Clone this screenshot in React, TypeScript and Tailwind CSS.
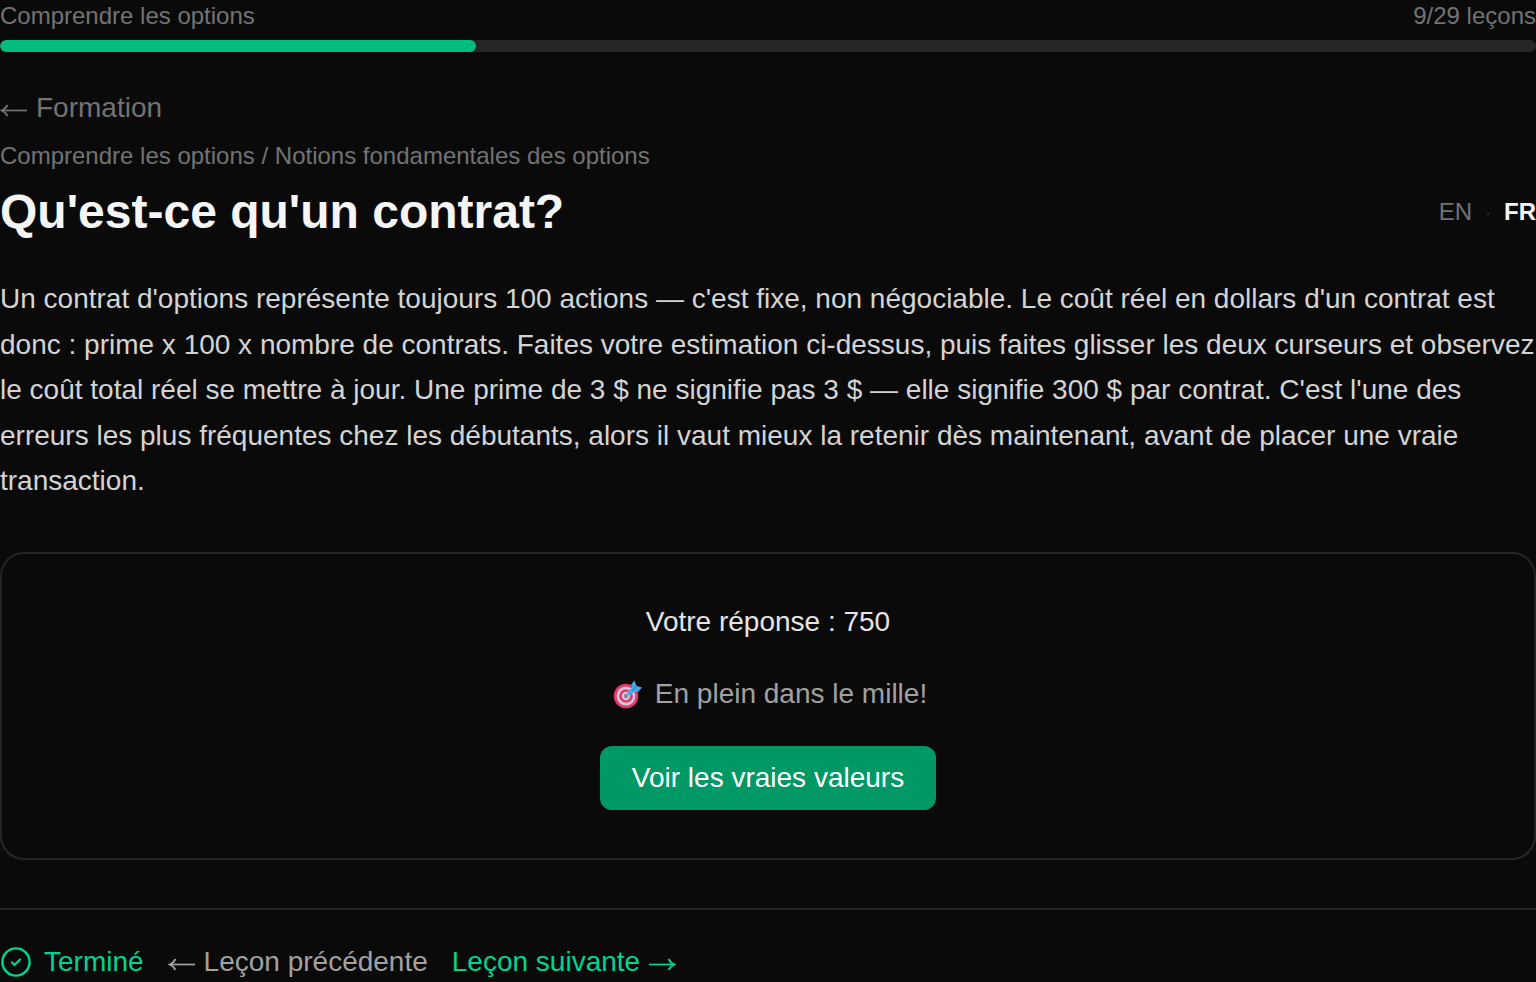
import { useState } from "react";

const lessonsDone = 9;
const lessonsTotal = 29;

type Lang = "en" | "fr";

function ArrowLeft() {
  return (
    <svg
      viewBox="0 0 28 40"
      className="w-7 h-10 shrink-0"
      fill="none"
      stroke="currentColor"
      strokeWidth="1.7"
      aria-hidden="true"
    >
      <path d="M27 22.5H2" />
      <path d="M7.5 17Q5.5 21 1.5 22.5Q5.5 24 7.5 28" />
    </svg>
  );
}

function ArrowRight() {
  return (
    <svg
      viewBox="0 0 28 40"
      className="w-7 h-10 shrink-0"
      fill="none"
      stroke="currentColor"
      strokeWidth="1.7"
      aria-hidden="true"
    >
      <path d="M1 22.5H26" />
      <path d="M20.5 17Q22.5 21 26.5 22.5Q22.5 24 20.5 28" />
    </svg>
  );
}

function TargetIcon() {
  return (
    <svg
      viewBox="2 -1 38 30"
      className="w-[38px] h-[30px] shrink-0"
      role="img"
      aria-label="Cible"
    >
      <circle cx="19" cy="16" r="12.3" fill="#df3b6c" />
      <circle cx="19" cy="16" r="9.4" fill="#d5c6dc" />
      <circle cx="19" cy="16" r="6.8" fill="#df3b6c" />
      <circle cx="19" cy="16" r="4.2" fill="#d5c6dc" />
      <circle cx="19" cy="16" r="2.2" fill="#8b8b94" />
      <path
        d="M20.5 11.5L25 8L24.2 4.5L27.5 0.5L29 5L30.5 6.3L35 7.5L31 12L27 12L23.5 15.5L20.5 14.5Z"
        fill="#45a9e6"
      />
      <path d="M25.5 10.5L30 6" stroke="#2279c9" strokeWidth="1" />
    </svg>
  );
}

function DoneIcon() {
  return (
    <svg
      viewBox="0 0 32 32"
      className="w-8 h-8 shrink-0"
      fill="none"
      stroke="currentColor"
      strokeWidth="2.4"
      strokeLinecap="round"
      strokeLinejoin="round"
      aria-hidden="true"
    >
      <circle cx="16" cy="16" r="13.6" />
      <path d="M12 16.5L14.5 19L20 13.5" />
    </svg>
  );
}

export default function App() {
  const [lang, setLang] = useState<Lang>("fr");

  const progress = (lessonsDone / lessonsTotal) * 100;

  const langClass = (value: Lang) =>
    lang === value ? "font-bold text-neutral-100" : "text-neutral-500";

  return (
    <main className="min-h-screen bg-neutral-950 text-neutral-200 font-['Liberation_Sans',Arial,sans-serif] text-[28px] leading-10">
      {/* Progress */}
      <div className="mb-9">
        <div className="mb-2 flex justify-between text-2xl text-neutral-500">
          <span>Comprendre les options</span>
          <span>
            {lessonsDone}/{lessonsTotal} leçons
          </span>
        </div>
        <div className="h-3 rounded-full bg-neutral-800 overflow-hidden">
          <div
            className="h-full rounded-full bg-emerald-500"
            style={{ width: `${Math.round(progress)}%` }}
          />
        </div>
      </div>

      {/* Header */}
      <a href="#formation" className="flex w-fit gap-2 text-neutral-500">
        <ArrowLeft />
        Formation
      </a>
      <p className="mt-3 text-2xl text-neutral-500">
        Comprendre les options / Notions fondamentales des options
      </p>
      <div className="mt-2 mb-8 flex items-center justify-between">
        <h1 className="text-5xl leading-16 font-bold text-neutral-100">
          Qu'est-ce qu'un contrat?
        </h1>
        <div className="flex items-center gap-3 text-2xl">
          <button className={langClass("en")} onClick={() => setLang("en")}>
            EN
          </button>
          <span className="text-neutral-800">·</span>
          <button className={langClass("fr")} onClick={() => setLang("fr")}>
            FR
          </button>
        </div>
      </div>

      {/* Lesson text */}
      <p className="leading-relaxed text-neutral-300">
        Un contrat d'options représente toujours 100 actions — c'est fixe, non
        négociable. Le coût réel en dollars d'un contrat est donc : prime x 100
        x nombre de contrats. Faites votre estimation ci-dessus, puis faites
        glisser les deux curseurs et observez le coût total réel se mettre à
        jour. Une prime de 3 $ ne signifie pas 3 $ — elle signifie 300 $ par
        contrat. C'est l'une des erreurs les plus fréquentes chez les débutants,
        alors il vaut mieux la retenir dès maintenant, avant de placer une vraie
        transaction.
      </p>

      {/* Answer */}
      <section className="mt-12 flex flex-col items-center gap-8 rounded-3xl border-2 border-neutral-800 p-12">
        <p>Votre réponse : 750</p>
        <p className="flex items-center gap-2 text-neutral-400">
          <TargetIcon />
          <span>En plein dans le mille!</span>
        </p>
        <button className="rounded-xl bg-emerald-600 px-8 py-3 text-white">
          Voir les vraies valeurs
        </button>
      </section>

      {/* Footer nav */}
      <footer className="mt-12 flex items-center gap-6 border-t-2 border-neutral-800 pt-8">
        <button className="flex items-center gap-3 text-emerald-400">
          <DoneIcon />
          Terminé
        </button>
        <a href="#precedente" className="flex gap-2 text-neutral-400">
          <ArrowLeft />
          Leçon précédente
        </a>
        <a href="#suivante" className="flex gap-2 text-emerald-400">
          Leçon suivante
          <ArrowRight />
        </a>
      </footer>
    </main>
  );
}
